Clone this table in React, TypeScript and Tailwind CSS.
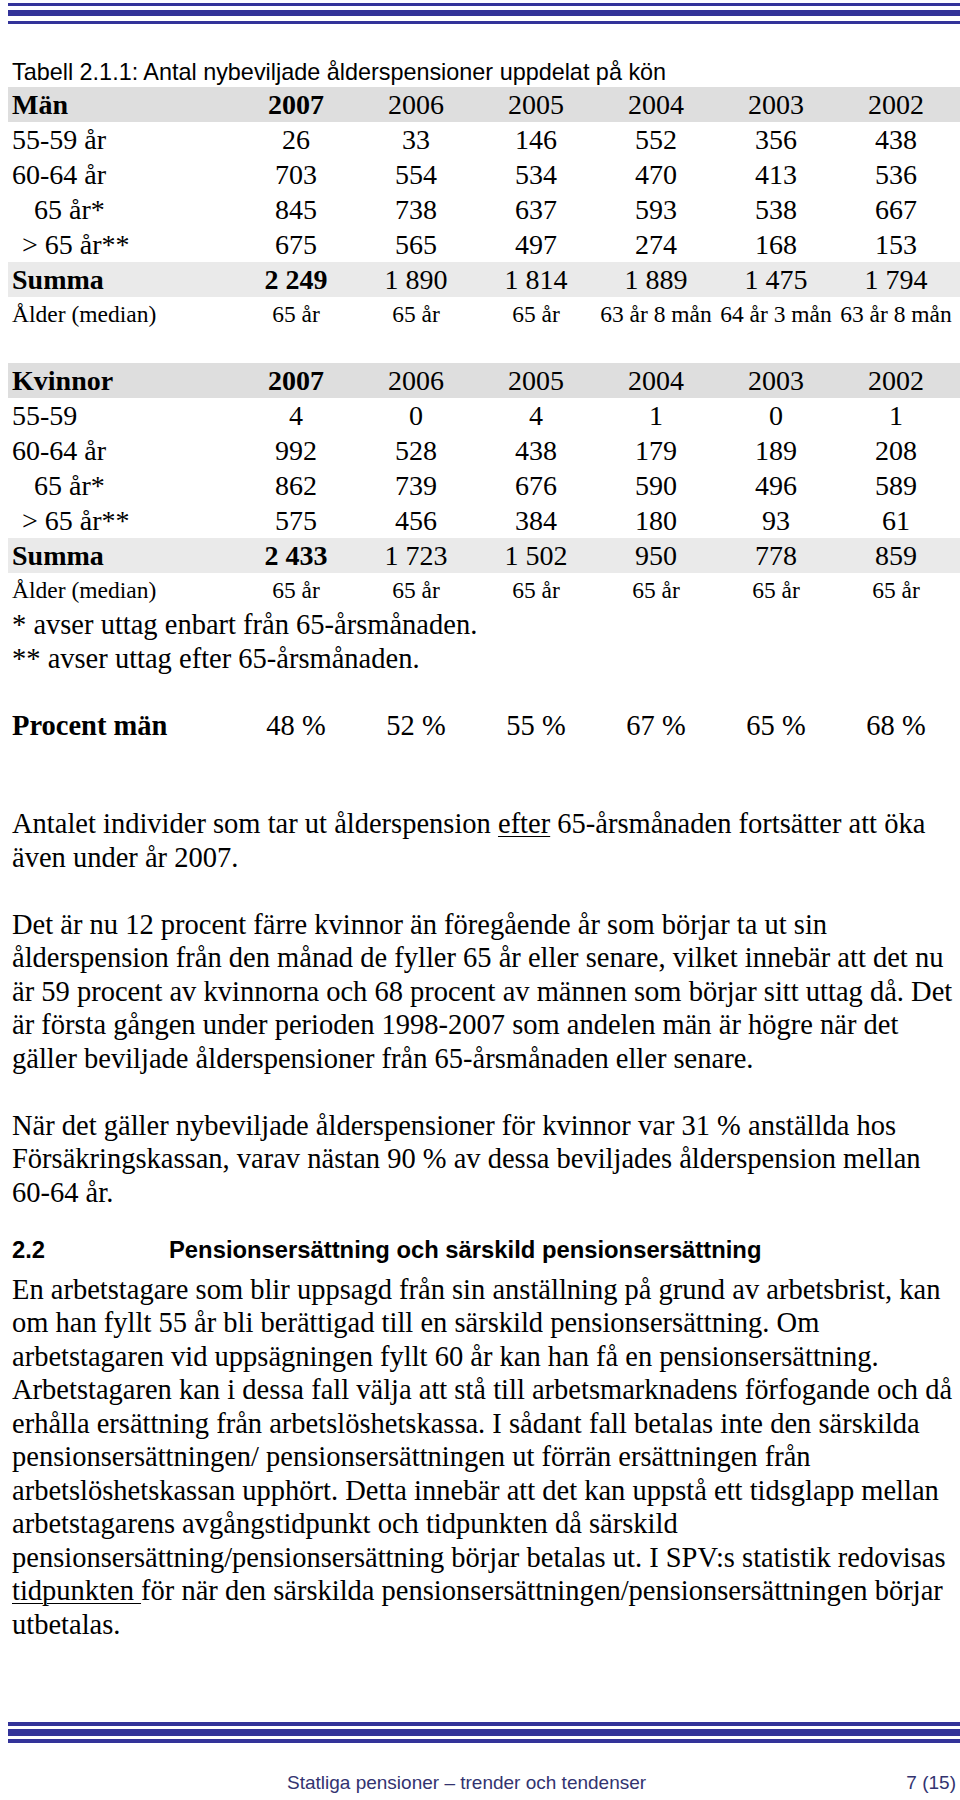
const YEARS = ['2007', '2006', '2005', '2004', '2003', '2002'];

type Row = {
  label: string;
  indent?: string;
  values: string[];
  kind?: 'sum' | 'median';
};

const menRows: Row[] = [
  { label: '55-59 år', values: ['26', '33', '146', '552', '356', '438'] },
  { label: '60-64 år', values: ['703', '554', '534', '470', '413', '536'] },
  { label: '65 år*', indent: 'pl-[26px]', values: ['845', '738', '637', '593', '538', '667'] },
  { label: '> 65 år**', indent: 'pl-[14px]', values: ['675', '565', '497', '274', '168', '153'] },
  { label: 'Summa', kind: 'sum', values: ['2 249', '1 890', '1 814', '1 889', '1 475', '1 794'] },
  {
    label: 'Ålder (median)',
    kind: 'median',
    values: ['65 år', '65 år', '65 år', '63 år 8 mån', '64 år 3 mån', '63 år 8 mån'],
  },
];

const womenRows: Row[] = [
  { label: '55-59', values: ['4', '0', '4', '1', '0', '1'] },
  { label: '60-64 år', values: ['992', '528', '438', '179', '189', '208'] },
  { label: '65 år*', indent: 'pl-[26px]', values: ['862', '739', '676', '590', '496', '589'] },
  { label: '> 65 år**', indent: 'pl-[14px]', values: ['575', '456', '384', '180', '93', '61'] },
  { label: 'Summa', kind: 'sum', values: ['2 433', '1 723', '1 502', '950', '778', '859'] },
  { label: 'Ålder (median)', kind: 'median', values: ['65 år', '65 år', '65 år', '65 år', '65 år', '65 år'] },
];

const gridCols = 'grid grid-cols-[228px_repeat(6,120px)]';

function Stripes({ bottom }: { bottom?: boolean }) {
  if (bottom) {
    return (
      <div className="ml-[8px] flex flex-col">
        <div className="h-[4px] bg-[#333399]" />
        <div className="mt-[3px] h-[7px] bg-[#333399]" />
        <div className="mt-[3px] h-[4px] bg-[#333399]" />
      </div>
    );
  }
  return (
    <div className="ml-[8px] flex flex-col pt-[3px]">
      <div className="h-[3px] bg-[#333399]" />
      <div className="mt-[4px] h-[6px] bg-[#333399]" />
      <div className="mt-[5px] h-[3px] bg-[#333399]" />
    </div>
  );
}

function StatTable({ title, rows }: { title: string; rows: Row[] }) {
  return (
    <div className="ml-[8px] text-[28px]">
      <div className={`${gridCols} h-[35px] items-center bg-[#dedede] leading-[35px]`}>
        <div className="pl-[4px] font-bold">{title}</div>
        {YEARS.map((y, i) => (
          <div key={y} className={i === 0 ? 'text-center font-bold' : 'text-center'}>
            {y}
          </div>
        ))}
      </div>
      {rows.map((row) => (
        <div
          key={row.label}
          className={
            row.kind === 'sum'
              ? `${gridCols} h-[35px] items-center bg-[#eaeaea] leading-[35px]`
              : row.kind === 'median'
                ? `${gridCols} h-[35px] items-center text-[23.5px] leading-[35px]`
                : `${gridCols} h-[35px] items-center leading-[35px]`
          }
        >
          <div className={`${row.indent ?? 'pl-[4px]'} whitespace-nowrap ${row.kind === 'sum' ? 'font-bold' : ''}`}>
            {row.label}
          </div>
          {row.values.map((v, i) => (
            <div
              key={i}
              className={`whitespace-nowrap text-center ${row.kind === 'sum' && i === 0 ? 'font-bold' : ''}`}
            >
              {v}
            </div>
          ))}
        </div>
      ))}
    </div>
  );
}

export default function App() {
  return (
    <div className="min-h-[1800px] w-[960px] overflow-hidden bg-white font-['Liberation_Serif',serif] text-black">
      <Stripes />

      <h1 className="mt-[34px] ml-[12px] whitespace-nowrap font-['Liberation_Sans',sans-serif] text-[23.4px] leading-[28px]">
        Tabell 2.1.1: Antal nybeviljade ålderspensioner uppdelat på kön
      </h1>

      <div className="mt-[1px]">
        <StatTable title="Män" rows={menRows} />
      </div>

      <div className="mt-[31px]">
        <StatTable title="Kvinnor" rows={womenRows} />
      </div>

      <div className="ml-[12px] text-[28.5px] leading-[34px]">
        <p>* avser uttag enbart från 65-årsmånaden.</p>
        <p>** avser uttag efter 65-årsmånaden.</p>
      </div>

      <div className={`${gridCols} mt-[32px] ml-[8px] h-[35px] items-center text-[28.5px] leading-[35px]`}>
        <div className="pl-[4px] font-bold">Procent män</div>
        {['48 %', '52 %', '55 %', '67 %', '65 %', '68 %'].map((v) => (
          <div key={v} className="text-center">
            {v}
          </div>
        ))}
      </div>

      <div className="ml-[12px] whitespace-nowrap text-[28.5px] leading-[33.5px]">
        <p className="mt-[64px]">
          Antalet individer som tar ut ålderspension{' '}
          <span className="underline decoration-1 underline-offset-[3px]">efter</span> 65-årsmånaden fortsätter att öka
          <br />
          även under år 2007.
        </p>

        <p className="mt-[33.5px]">
          Det är nu 12 procent färre kvinnor än föregående år som börjar ta ut sin
          <br />
          ålderspension från den månad de fyller 65 år eller senare, vilket innebär att det nu
          <br />
          är 59 procent av kvinnorna och 68 procent av männen som börjar sitt uttag då. Det
          <br />
          är första gången under perioden 1998-2007 som andelen män är högre när det
          <br />
          gäller beviljade ålderspensioner från 65-årsmånaden eller senare.
        </p>

        <p className="mt-[33.5px]">
          När det gäller nybeviljade ålderspensioner för kvinnor var 31 % anställda hos
          <br />
          Försäkringskassan, varav nästan 90 % av dessa beviljades ålderspension mellan
          <br />
          60-64 år.
        </p>

        <h2 className="mt-[26.5px] flex font-['Liberation_Sans',sans-serif] text-[23.8px] font-bold leading-[28px]">
          <span className="w-[157px]">2.2</span>
          <span>Pensionsersättning och särskild pensionsersättning</span>
        </h2>

        <p className="mt-[9px]">
          En arbetstagare som blir uppsagd från sin anställning på grund av arbetsbrist, kan
          <br />
          om han fyllt 55 år bli berättigad till en särskild pensionsersättning. Om
          <br />
          arbetstagaren vid uppsägningen fyllt 60 år kan han få en pensionsersättning.
          <br />
          Arbetstagaren kan i dessa fall välja att stå till arbetsmarknadens förfogande och då
          <br />
          erhålla ersättning från arbetslöshetskassa. I sådant fall betalas inte den särskilda
          <br />
          pensionsersättningen/ pensionsersättningen ut förrän ersättningen från
          <br />
          arbetslöshetskassan upphört. Detta innebär att det kan uppstå ett tidsglapp mellan
          <br />
          arbetstagarens avgångstidpunkt och tidpunkten då särskild
          <br />
          pensionsersättning/pensionsersättning börjar betalas ut. I SPV:s statistik redovisas
          <br />
          <span className="underline decoration-1 underline-offset-[3px]">tidpunkten </span>för när den särskilda
          pensionsersättningen/pensionsersättningen börjar
          <br />
          utbetalas.
        </p>
      </div>

      <div className="mt-[80.5px]">
        <Stripes bottom />
      </div>

      <div className="mt-[29px] flex items-baseline font-['Liberation_Sans',sans-serif] text-[19px] leading-[22px] text-[#333370]">
        <span className="ml-[287px]">Statliga pensioner – trender och tendenser</span>
        <span className="ml-auto mr-[4px]">7 (15)</span>
      </div>
    </div>
  );
}
